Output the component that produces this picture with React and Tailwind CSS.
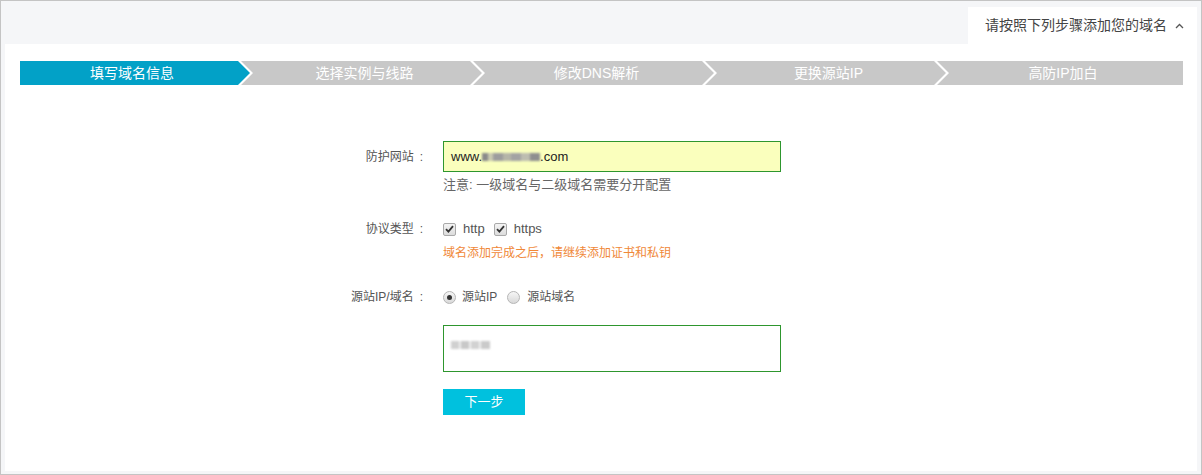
import React from 'react';

const steps = ['填写域名信息', '选择实例与线路', '修改DNS解析', '更换源站IP', '高防IP加白'];

function Check() {
  return (
    <span className="flex h-[13px] w-[13px] items-center justify-center rounded-[2px] border border-[#a9a9a9] bg-gradient-to-b from-[#f4f4f4] to-[#dcdcdc]">
      <svg width="9" height="8" viewBox="0 0 9 8">
        <path d="M1 4.2 L3.4 6.6 L8 1.2" fill="none" stroke="#333" strokeWidth="1.8" />
      </svg>
    </span>
  );
}

function Radio({ on }) {
  return (
    <span className="flex h-[13px] w-[13px] items-center justify-center rounded-full border border-[#b5b5b5] bg-gradient-to-b from-[#f6f6f6] to-[#d9d9d9]">
      {on && <span className="h-[5px] w-[5px] rounded-full bg-[#333]"></span>}
    </span>
  );
}

function Blur({ blocks }) {
  return (
    <span className="inline-flex items-center blur-[1px]">
      {blocks.map(([w, c], i) => (
        <span key={i} className="inline-block h-[8px]" style={{ width: w, background: c }}></span>
      ))}
    </span>
  );
}

function Label({ children, h }) {
  return (
    <div className={`flex w-[408px] items-center justify-end pr-[5px] ${h}`}>
      {children}
      <span className="ml-[6px]">:</span>
    </div>
  );
}

export default function App() {
  return (
    <div
      className="flex h-[475px] w-[1202px] flex-col border border-[#c4c4c4] bg-[#f5f6f8] pb-[3px] pl-[4px] pr-[4px] text-[#555]"
      style={{ fontFamily: '"Liberation Sans", "Noto Sans CJK SC", sans-serif' }}
    >
      <div className="flex h-[43px] justify-end">
        <div className="mt-[6px] flex h-[37px] w-[229px] items-center bg-white pl-[17px] text-[14px] text-[#444]">
          <span>请按照下列步骤添加您的域名</span>
          <svg className="ml-[8px]" width="9" height="6" viewBox="0 0 9 6">
            <path d="M1 5 L4.5 1.5 L8 5" fill="none" stroke="#555" strokeWidth="1.3" />
          </svg>
        </div>
      </div>

      <div className="flex-1 bg-white pl-[15px] pr-[14px] pt-[17px]">
        <div className="flex h-[24px] text-[14px] text-white">
          {steps.map((s, i) => {
            let cls = '';
            if (i === 0)
              cls = 'w-[230px] bg-[#02a1c7] [clip-path:polygon(0_0,calc(100%_-_12px)_0,100%_50%,calc(100%_-_12px)_100%,0_100%)]';
            else if (i < 4)
              cls = 'w-[241px] -ml-[9px] bg-[#c8c8c8] pl-[12px] [clip-path:polygon(0_0,calc(100%_-_12px)_0,100%_50%,calc(100%_-_12px)_100%,0_100%,12px_50%)]';
            else
              cls = 'flex-1 -ml-[9px] bg-[#c8c8c8] pl-[12px] [clip-path:polygon(0_0,100%_0,100%_100%,0_100%,12px_50%)]';
            return (
              <div key={s} className={`flex items-center justify-center pr-[6px] ${cls}`}>
                {s}
              </div>
            );
          })}
        </div>

        <div className="mt-[56px] flex flex-col text-[12px]">
          <div className="flex gap-[15px]">
            <Label h="h-[31px]">防护网站</Label>
            <div className="flex flex-col">
              <div className="flex h-[31px] w-[338px] items-center border border-[#2e962e] bg-[#faffbd] pl-[7px] text-[13px] text-[#222]">
                www.
                <Blur blocks={[[6, '#8a8a8a'], [5, '#c9c9b0'], [10, '#9d9d9d'], [8, '#b5b5a8'], [10, '#a3a3a3'], [9, '#bdbdb0'], [10, '#8f8f8f']]} />
                .com
              </div>
              <div className="mt-[5px] text-[13px] leading-[16px] text-[#666]">注意: 一级域名与二级域名需要分开配置</div>
            </div>
          </div>

          <div className="mt-[26px] flex gap-[15px]">
            <Label h="h-[20px]">协议类型</Label>
            <div className="flex flex-col">
              <div className="flex h-[20px] items-center text-[13px]">
                <Check />
                <span className="ml-[7px]">http</span>
                <span className="ml-[9px]"><Check /></span>
                <span className="ml-[7px]">https</span>
              </div>
              <div className="mt-[6px] leading-[16px] text-[#f08838]">域名添加完成之后，请继续添加证书和私钥</div>
            </div>
          </div>

          <div className="mt-[26px] flex gap-[15px]">
            <Label h="h-[20px]">源站IP/域名</Label>
            <div className="flex flex-col">
              <div className="flex h-[20px] items-center">
                <Radio on />
                <span className="ml-[6px]">源站IP</span>
                <span className="ml-[10px]"><Radio /></span>
                <span className="ml-[7px]">源站域名</span>
              </div>
              <div className="mt-[18px] h-[47px] w-[338px] border border-[#2e962e] bg-white pl-[7px] pt-[10px]">
                <Blur blocks={[[8, '#d0d0d0'], [2, '#f0f0f0'], [8, '#c8c8c8'], [2, '#f0f0f0'], [8, '#d2d2d2'], [2, '#f0f0f0'], [9, '#cacaca']]} />
              </div>
              <button className="mt-[17px] h-[26px] w-[82px] bg-[#00c1de] text-[13px] text-white">下一步</button>
            </div>
          </div>
        </div>
      </div>
    </div>
  );
}
